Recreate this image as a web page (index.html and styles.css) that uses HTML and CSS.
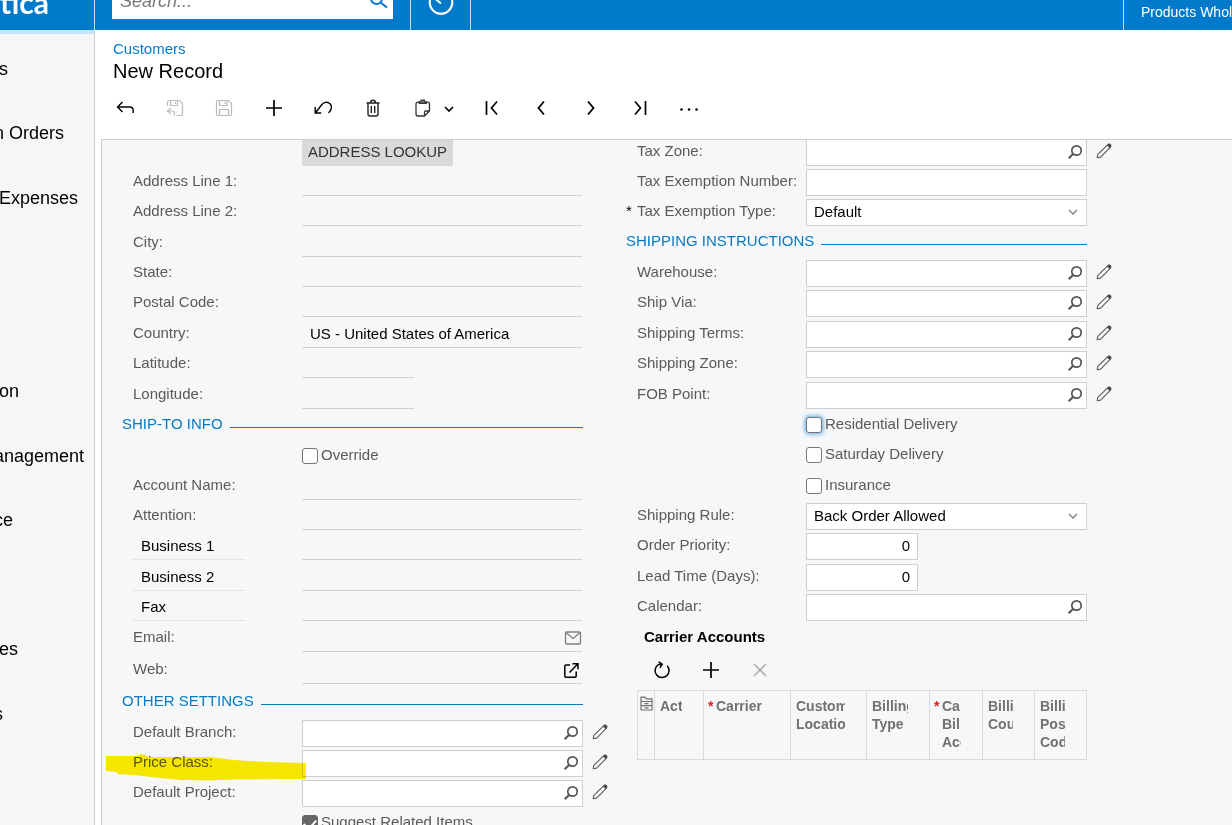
FILE: index.html
```html
<!DOCTYPE html>
<html lang="en">
<head>
  <meta charset="UTF-8" />
  <meta name="viewport" content="width=device-width, initial-scale=1.0" />
  <title>Customers - New Record</title>
  <link rel="stylesheet" href="styles.css">
</head>
<body>
  <!-- shared icons -->
  <svg class="sprite" aria-hidden="true">
    <symbol id="search" viewBox="0 0 16 16"><circle cx="9.5" cy="6.5" r="4.7" fill="none" stroke="#555" stroke-width="1.7"/><path d="M6 10L1.7 14.3" stroke="#555" stroke-width="2"/></symbol>
    <symbol id="pencil" viewBox="0 0 16 16"><path d="M1.2 14.8L1.8 11.4 11.6 1.8C12.4.9 13.6.9 14.3 1.6 15.1 2.4 15 3.6 14.2 4.4L4.6 14.1Z" fill="none" stroke="#5c5c5c" stroke-width="1.1" stroke-linejoin="round"/><path d="M11 2.4L13.6 5 14.7 4C15.4 3.1 15.3 2.2 14.6 1.4 13.8.7 12.8.7 12 1.3Z" fill="#4a4a4a"/></symbol>
    <symbol id="down" viewBox="0 0 10 10"><path d="M1 3L5 7 9 3" fill="none" stroke="#858585" stroke-width="1.5"/></symbol>
    <symbol id="plus" viewBox="0 0 16 16"><path d="M8 0V16M0 8H16" stroke="#000" stroke-width="1.7"/></symbol>
  </svg>

  <header class="topbar">
    <div class="logo">tica</div>
    <div class="search">
      <input type="text" placeholder="Search..." aria-label="Search">
      <button type="button" aria-label="Search"><svg width="20" height="20" viewBox="0 0 20 20"><circle cx="7.5" cy="7.5" r="5.5" fill="none" stroke="#027acc" stroke-width="2"/><path d="M11.5 11.5L18 16.5" stroke="#027acc" stroke-width="2.2"/></svg></button>
    </div>
    <button type="button" class="clock" aria-label="Business date"><svg width="26" height="26" viewBox="0 0 26 26" fill="none" stroke="#fff" stroke-width="2"><circle cx="13" cy="13.5" r="11.3"/><path d="M7.5 10L13 14.5"/></svg></button>
    <a href="#" class="company">Products Wholesale</a>
  </header>

  <div class="page">
    <nav class="sidebar">
      <ul>
        <li class="near"><a href="#">s</a></li>
        <li><a href="#">n Orders</a></li>
        <li class="near"><a href="#">Expenses</a></li>
        <li></li>
        <li></li>
        <li class="near"><a href="#">on</a></li>
        <li><a href="#">anagement</a></li>
        <li><a href="#">ce</a></li>
        <li></li>
        <li class="near"><a href="#">es</a></li>
        <li><a href="#">s</a></li>
      </ul>
    </nav>

    <main>
      <div class="title">
        <a href="#">Customers</a>
        <h1>New Record</h1>
      </div>

      <div class="toolbar">
        <button type="button" aria-label="Back"><svg width="18" height="18" viewBox="0 0 18 18" fill="none" stroke="#000" stroke-width="1.4"><path d="M6.5 3L1.5 8 6.5 13M1.5 8H13.5Q17.2 8 17.2 11.5V14"/></svg></button>
        <button type="button" aria-label="Save and close" disabled><svg width="18" height="18" viewBox="0 0 18 18" fill="none" stroke="#bbb" stroke-width="1.2"><path d="M1.5 7V3Q1.5 1.5 3 1.5H13.5L16.5 4.5V15Q16.5 16.5 15 16.5H10.5M4.5 1.5V6.5H11.5V1.5M9.5 3V5M5 9L1.5 12 5 15M1.5 12H6.5Q8.5 12 8.5 14V16.5"/></svg></button>
        <button type="button" aria-label="Save" disabled><svg width="18" height="18" viewBox="0 0 18 18" fill="none" stroke="#bbb" stroke-width="1.2"><path d="M1.5 3Q1.5 1.5 3 1.5H13.5L16.5 4.5V15Q16.5 16.5 15 16.5H3Q1.5 16.5 1.5 15ZM4.5 1.5V6.5H12V1.5M10 3V5M4.5 16.5V10.5H13.5V16.5"/></svg></button>
        <button type="button" aria-label="Add"><svg width="16" height="16"><use href="#plus"/></svg></button>
        <button type="button" aria-label="Undo"><svg width="18" height="18" viewBox="0 0 18 18" fill="none" stroke="#000" stroke-width="1.4"><path d="M1.2 8V14H7.2M1.5 13.7L7.5 6C9.5 3 13.5 2.3 16 4.8 18.3 7.2 17.8 11 14.5 14"/></svg></button>
        <button type="button" aria-label="Delete"><svg width="18" height="18" viewBox="0 0 18 18" fill="none" stroke="#222" stroke-width="1.4"><path d="M2.5 4H15.5M4 4V15Q4 17 6 17H12Q14 17 14 15V4M6.5 3.5Q6.5 1.2 9 1.2T11.5 3.5M7.3 7V14M10.7 7V14"/></svg></button>
        <div class="split">
          <button type="button" aria-label="Clipboard"><svg width="18" height="18" viewBox="0 0 18 18" fill="none" stroke="#333" stroke-width="1.3"><path d="M5 3.2H4Q2 3.2 2 5.2V15Q2 17 4 17H10.5L15.5 12V5.2Q15.5 3.2 13.5 3.2H12.5M15.5 12H12Q10.5 12 10.5 13.5V17"/><path d="M5.2 4.4V3Q7 3 7.3 1.2H10.2Q10.5 3 12.3 3V4.4Z" fill="#777"/></svg></button>
          <button type="button" aria-label="Clipboard menu"><svg width="12" height="12" viewBox="0 0 12 12"><path d="M2 5L6 9 10 5" fill="none" stroke="#000" stroke-width="1.7"/></svg></button>
        </div>
        <button type="button" aria-label="First"><svg width="16" height="16" viewBox="0 0 16 16" fill="none" stroke="#000" stroke-width="1.7"><path d="M2.5 1V15M13 1.5L7.5 8 13 14.5"/></svg></button>
        <button type="button" aria-label="Previous"><svg width="16" height="16" viewBox="0 0 16 16" fill="none" stroke="#000" stroke-width="1.8"><path d="M11 1.5L5.5 8 11 14.5"/></svg></button>
        <button type="button" aria-label="Next"><svg width="16" height="16" viewBox="0 0 16 16" fill="none" stroke="#000" stroke-width="1.8"><path d="M5 1.5L10.5 8 5 14.5"/></svg></button>
        <button type="button" aria-label="Last"><svg width="16" height="16" viewBox="0 0 16 16" fill="none" stroke="#000" stroke-width="1.7"><path d="M13.5 1V15M3 1.5L8.5 8 3 14.5"/></svg></button>
        <button type="button" aria-label="More"><svg width="20" height="16" viewBox="0 0 20 16"><circle cx="1.5" cy="9.5" r="1.3"/><circle cx="9" cy="9.5" r="1.3"/><circle cx="16.5" cy="9.5" r="1.3"/></svg></button>
      </div>

      <form class="panel">
        <div class="column">
          <div class="row"><span></span><button type="button" class="lookup">ADDRESS LOOKUP</button></div>
          <div class="row"><label for="line1">Address Line 1:</label><input type="text" class="plain" id="line1"></div>
          <div class="row"><label for="line2">Address Line 2:</label><input type="text" class="plain" id="line2"></div>
          <div class="row tall"><label for="city">City:</label><input type="text" class="plain" id="city"></div>
          <div class="row"><label for="state">State:</label><input type="text" class="plain" id="state"></div>
          <div class="row"><label for="postal">Postal Code:</label><input type="text" class="plain" id="postal"></div>
          <div class="row tall"><label for="country">Country:</label><input type="text" class="plain" id="country" value="US - United States of America"></div>
          <div class="row"><label for="lat">Latitude:</label><input type="text" class="plain short" id="lat"></div>
          <div class="row tall"><label for="long">Longitude:</label><input type="text" class="plain short" id="long"></div>

          <h2>SHIP-TO INFO</h2>
          <div class="row"><span></span><div class="check"><input type="checkbox" id="override"><label for="override">Override</label></div></div>
          <div class="row"><label for="account">Account Name:</label><input type="text" class="plain" id="account"></div>
          <div class="row"><label for="attention">Attention:</label><input type="text" class="plain" id="attention"></div>
          <div class="row"><select class="phone" aria-label="Phone 1 type"><option>Business 1</option></select><input type="text" class="plain" aria-label="Phone 1"></div>
          <div class="row tall"><select class="phone" aria-label="Phone 2 type"><option>Business 2</option></select><input type="text" class="plain" aria-label="Phone 2"></div>
          <div class="row"><select class="phone" aria-label="Phone 3 type"><option>Fax</option></select><input type="text" class="plain" aria-label="Phone 3"></div>
          <div class="row tall"><label for="email">Email:</label>
            <div class="linked"><input type="text" id="email"><button type="button" aria-label="Send email"><svg width="18" height="16" viewBox="0 0 18 16" fill="none" stroke="#808080" stroke-width="1.3"><rect x="1.5" y="2" width="15" height="12" rx="1"/><path d="M2 2.5L9 8.5 16 2.5"/></svg></button></div>
          </div>
          <div class="row web"><label for="web">Web:</label>
            <div class="linked"><input type="text" id="web"><button type="button" aria-label="Open site"><svg width="20" height="16" viewBox="0 0 20 16" fill="none" stroke="#000" stroke-width="1.5"><path d="M8 3H4Q2.8 3 2.8 4.2V14Q2.8 15.2 4 15.2H13Q14.2 15.2 14.2 14V9.5M7.5 10.5L15.5 2.2M10.5 1.8H16V7.3"/></svg></button></div>
          </div>

          <h2 class="spaced">OTHER SETTINGS</h2>
          <div class="row"><label for="branch">Default Branch:</label><div class="field"><input type="text" id="branch"><button type="button" aria-label="Select branch"><svg width="16" height="16"><use href="#search"/></svg></button></div><button type="button" class="edit" aria-label="Edit branch"><svg width="16" height="16"><use href="#pencil"/></svg></button></div>
          <div class="row"><label for="price">Price Class:</label><div class="field"><input type="text" id="price"><button type="button" aria-label="Select price class"><svg width="16" height="16"><use href="#search"/></svg></button></div><button type="button" class="edit" aria-label="Edit price class"><svg width="16" height="16"><use href="#pencil"/></svg></button>
            <svg class="marker" width="200" height="27" viewBox="0 0 200 27"><path d="M0 2H32L35 0 39 1 42 3 104 3 128 6 160 8 200 9V25L128 25.5 104 26.5 75 26 50 23.5 28 21 11 20V18L0 17Z" fill="#ffee00"/></svg>
          </div>
          <div class="row"><label for="project">Default Project:</label><div class="field"><input type="text" id="project"><button type="button" aria-label="Select project"><svg width="16" height="16"><use href="#search"/></svg></button></div><button type="button" class="edit" aria-label="Edit project"><svg width="16" height="16"><use href="#pencil"/></svg></button></div>
          <div class="row"><span></span><div class="check"><input type="checkbox" id="suggest" checked><label for="suggest">Suggest Related Items</label></div></div>
        </div>

        <div class="column">
          <div class="row"><label for="taxzone">Tax Zone:</label><div class="field"><input type="text" id="taxzone"><button type="button" aria-label="Select tax zone"><svg width="16" height="16"><use href="#search"/></svg></button></div><button type="button" class="edit" aria-label="Edit tax zone"><svg width="16" height="16"><use href="#pencil"/></svg></button></div>
          <div class="row"><label for="taxno">Tax Exemption Number:</label><div class="field"><input type="text" id="taxno"></div></div>
          <div class="row"><label for="taxtype" class="required">Tax Exemption Type:</label><div class="field"><select id="taxtype"><option>Default</option></select><svg class="arrow" width="10" height="10"><use href="#down"/></svg></div></div>

          <h2>SHIPPING INSTRUCTIONS</h2>
          <div class="row"><label for="warehouse">Warehouse:</label><div class="field"><input type="text" id="warehouse"><button type="button" aria-label="Select warehouse"><svg width="16" height="16"><use href="#search"/></svg></button></div><button type="button" class="edit" aria-label="Edit warehouse"><svg width="16" height="16"><use href="#pencil"/></svg></button></div>
          <div class="row"><label for="via">Ship Via:</label><div class="field"><input type="text" id="via"><button type="button" aria-label="Select ship via"><svg width="16" height="16"><use href="#search"/></svg></button></div><button type="button" class="edit" aria-label="Edit ship via"><svg width="16" height="16"><use href="#pencil"/></svg></button></div>
          <div class="row tall"><label for="terms">Shipping Terms:</label><div class="field"><input type="text" id="terms"><button type="button" aria-label="Select terms"><svg width="16" height="16"><use href="#search"/></svg></button></div><button type="button" class="edit" aria-label="Edit terms"><svg width="16" height="16"><use href="#pencil"/></svg></button></div>
          <div class="row"><label for="shipzone">Shipping Zone:</label><div class="field"><input type="text" id="shipzone"><button type="button" aria-label="Select shipping zone"><svg width="16" height="16"><use href="#search"/></svg></button></div><button type="button" class="edit" aria-label="Edit shipping zone"><svg width="16" height="16"><use href="#pencil"/></svg></button></div>
          <div class="row tall"><label for="fob">FOB Point:</label><div class="field"><input type="text" id="fob"><button type="button" aria-label="Select FOB point"><svg width="16" height="16"><use href="#search"/></svg></button></div><button type="button" class="edit" aria-label="Edit FOB point"><svg width="16" height="16"><use href="#pencil"/></svg></button></div>
          <div class="row"><span></span><div class="check active"><input type="checkbox" id="residential"><label for="residential">Residential Delivery</label></div></div>
          <div class="row"><span></span><div class="check"><input type="checkbox" id="saturday"><label for="saturday">Saturday Delivery</label></div></div>
          <div class="row tall"><span></span><div class="check"><input type="checkbox" id="insurance"><label for="insurance">Insurance</label></div></div>
          <div class="row"><label for="rule">Shipping Rule:</label><div class="field"><select id="rule"><option>Back Order Allowed</option></select><svg class="arrow" width="10" height="10"><use href="#down"/></svg></div></div>
          <div class="row"><label for="priority">Order Priority:</label><div class="field short"><input type="text" class="number" id="priority" value="0"></div></div>
          <div class="row tall"><label for="lead">Lead Time (Days):</label><div class="field short"><input type="text" class="number" id="lead" value="0"></div></div>
          <div class="row"><label for="calendar">Calendar:</label><div class="field"><input type="text" id="calendar"><button type="button" aria-label="Select calendar"><svg width="16" height="16"><use href="#search"/></svg></button></div></div>

          <section class="carriers">
            <h3>Carrier Accounts</h3>
            <div class="grid-tools">
              <button type="button" aria-label="Refresh"><svg width="18" height="18" viewBox="0 0 18 18" fill="none" stroke="#000" stroke-width="1.5"><path d="M4.2 4.5A7 7 0 1 0 14.2 4.8M4.2 4.5Q6 3.2 8.6 3.2M5.6.8L9.2 3.2 7 6.8"/></svg></button>
              <button type="button" aria-label="Add row"><svg width="16" height="16"><use href="#plus"/></svg></button>
              <button type="button" aria-label="Delete row" disabled><svg width="16" height="16" viewBox="0 0 16 16"><path d="M2 2L14 14M14 2L2 14" stroke="#b0b0b0" stroke-width="1.6"/></svg></button>
            </div>
            <table>
              <colgroup><col class="c-icon"><col class="c-active"><col class="c-carrier"><col class="c-location"><col class="c-type"><col class="c-bill"><col class="c-small"><col class="c-small"></colgroup>
              <thead>
                <tr>
                  <th class="files"><svg width="13" height="15" viewBox="0 0 13 15" fill="none" stroke="#707070" stroke-width="1.2"><path d="M1 14V1.2H5L6.5 2.8H12V14ZM1 5.5H12M1 9.7H12M4.5 7.6H8.5M4.5 11.8H8.5"/></svg></th>
                  <th><div>Active</div></th>
                  <th class="must"><div>Carrier</div></th>
                  <th><div>Customer<br>Location</div></th>
                  <th><div>Billing<br>Type</div></th>
                  <th class="must"><div>Carrier<br>Billing<br>Account</div></th>
                  <th><div>Billing<br>Country</div></th>
                  <th><div>Billing<br>Postal<br>Code</div></th>
                </tr>
              </thead>
            </table>
          </section>
        </div>
      </form>
    </main>
  </div>
</body>
</html>
```
FILE: styles.css
```css
* {
  box-sizing: border-box;
}
body {
  margin: 0;
  height: 100vh;
  overflow: hidden;
  display: flex;
  flex-direction: column;
  background: #fff;
  color: #000;
  font-family: "Liberation Sans", Arial, sans-serif;
  font-size: 15px;
}
.sprite {
  display: none;
}
svg {
  display: block;
  flex: none;
}
a {
  color: inherit;
  text-decoration: none;
}
button,
input,
select {
  font: inherit;
  color: inherit;
  margin: 0;
  padding: 0;
  border: none;
  border-radius: 0;
  background: none;
  outline: none;
}
button {
  display: flex;
  align-items: center;
  justify-content: center;
}

/* top bar */
.topbar {
  flex: none;
  height: 30px;
  display: flex;
  align-items: flex-end;
  overflow: hidden;
  background: #027acc;
  color: #fff;
}
.logo {
  width: 95px;
  height: 50px;
  border-right: 1px solid #c3e2f7;
  font-family: Lato, sans-serif;
  font-size: 30px;
  font-weight: bold;
  line-height: 44px;
}
.search {
  display: flex;
  align-items: center;
  width: 281px;
  height: 34px;
  margin: 0 17px 11px;
  padding: 0 4px 2px 8px;
  background: #fff;
}
.search input {
  flex: 1;
  min-width: 0;
  font-size: 18px;
  font-style: italic;
}
.search input::placeholder {
  color: #777;
}
.clock {
  width: 61px;
  height: 56px;
  border: solid #c3e2f7;
  border-width: 0 1px;
}
.company {
  width: 109px;
  height: 36px;
  margin-left: auto;
  padding-left: 17px;
  border-left: 1px solid #c3e2f7;
  font-size: 14px;
  line-height: 36px;
  white-space: nowrap;
}

.page {
  flex: 1;
  min-height: 0;
  display: flex;
}

/* side menu, scrolled to the right */
.sidebar {
  flex: none;
  width: 95px;
  overflow: hidden;
  background: #f5f6f8;
  border-top: 4px solid #c9e3f6;
  border-right: 1px solid #cdced2;
  font-size: 18px;
}
.sidebar ul {
  list-style: none;
  margin: 0;
  padding: 3px 0;
}
.sidebar li {
  height: 64px;
  margin-left: -6px;
  line-height: 65px;
  white-space: nowrap;
}
.sidebar li:nth-child(even) {
  height: 65px;
}
.sidebar .near {
  margin-left: -1px;
}

main {
  flex: 1;
  min-width: 0;
  display: flex;
  flex-direction: column;
}
.title {
  padding: 10px 18px 0;
}
.title a {
  display: block;
  color: #027acc;
  line-height: 18px;
}
.title h1 {
  margin: 0;
  font-size: 20px;
  font-weight: normal;
  line-height: 26px;
}

.toolbar {
  display: flex;
  height: 55px;
  padding: 8px 0 15px 5px;
}
.toolbar > button {
  width: 50px;
}
.toolbar > button:nth-child(even) {
  width: 49px;
}
.split {
  display: flex;
  gap: 11px;
  width: 70px;
  padding-left: 17px;
}

/* form */
.panel {
  flex: 1;
  min-height: 0;
  display: flex;
  overflow: hidden;
  margin-left: 6px;
  padding-left: 20px;
  background: #f5f7f9;
  border: solid #cdced2;
  border-width: 1px 0 0 1px;
}
.column {
  flex: 0 0 504px;
  margin-top: -1px;
}
.row {
  position: relative;
  display: grid;
  grid-template-columns: 180px 280px 34px;
  height: 27px;
  margin-bottom: 3px;
  color: #5a5a5c;
}
.tall {
  margin-top: 4px;
}
.web {
  margin-top: 5px;
}
.row label {
  line-height: 24px;
  white-space: nowrap;
}
.row > label {
  padding-left: 11px;
}
.required::before {
  content: "*";
  float: left;
  width: 11px;
  margin-left: -11px;
  color: #000;
}
.lookup {
  justify-self: start;
  width: 151px;
  padding-bottom: 2px;
  background: #d8d9db;
  color: #333;
}
.plain,
.linked {
  width: 280px;
  border-bottom: 1px solid #cdced0;
  color: #000;
}
.plain {
  padding: 0 0 2px 8px;
}
.linked {
  display: flex;
}
.linked input,
.field input,
.field select {
  flex: 1;
  min-width: 0;
  padding: 0 7px;
}
.field {
  display: flex;
  align-items: center;
  width: 281px;
  padding-bottom: 2px;
  border: 1px solid #cdced2;
  background: #fff;
  color: #000;
}
.field button {
  width: 22px;
}
.short {
  width: 112px;
}
.number {
  text-align: right;
}
select {
  appearance: none;
}
.arrow {
  margin-right: 8px;
}
.edit {
  justify-content: flex-end;
  padding: 0 8px 3px 0;
}
.phone {
  width: 112px;
  margin-left: 11px;
  padding: 0 0 1px 8px;
  border-bottom: 1px dotted #d5d6d9;
  color: #000;
}
.check {
  display: flex;
  gap: 3px;
}
.check input {
  appearance: none;
  width: 16px;
  height: 16px;
  margin-top: 5px;
  border: 1px solid #767676;
  border-radius: 3px;
  background: #fff;
}
.check input:checked {
  background: #666;
  border-color: #666;
  display: grid;
  place-items: center;
}
.check input:checked::before {
  content: "";
  width: 6px;
  height: 10px;
  border: solid #fff;
  border-width: 0 2px 2px 0;
  transform: rotate(42deg);
}
.active input {
  box-shadow: 0 0 4px 1px #5ba7dd;
}
.marker {
  position: absolute;
  left: -16px;
  top: 4px;
  mix-blend-mode: multiply;
  pointer-events: none;
}

h2 {
  display: flex;
  width: 461px;
  height: 28px;
  margin: 0 0 3px;
  color: #0a7ac0;
  font-size: 15px;
  font-weight: normal;
  line-height: 24px;
}
h2::after {
  content: "";
  flex: 1;
  height: 1px;
  margin: 15px 0 0 7px;
  background: #0a7ac0;
}
h2.spaced {
  margin-top: 5px;
}

/* carrier accounts grid */
.carriers {
  width: 450px;
  margin-left: 11px;
}
h3 {
  margin: 0;
  padding: 4px 7px;
  font-size: 15px;
  line-height: 18px;
}
.grid-tools {
  display: flex;
  height: 40px;
}
.grid-tools button {
  width: 49px;
}
table {
  width: 100%;
  table-layout: fixed;
  border-collapse: collapse;
  color: #707173;
  font-size: 14px;
  line-height: 18px;
}
th {
  height: 69px;
  padding: 6px 21px 7px 5px;
  border: 1px solid #d9dadd;
  text-align: left;
  vertical-align: top;
}
th div {
  overflow: hidden;
}
.files {
  padding: 5px 0 0 2px;
}
.must {
  position: relative;
  padding-left: 12px;
}
.must::before {
  content: "*";
  position: absolute;
  left: 4px;
  color: #e02020;
}
.c-icon {
  width: 17px;
}
.c-active {
  width: 49px;
}
.c-carrier {
  width: 87px;
}
.c-location {
  width: 76px;
}
.c-type {
  width: 63px;
}
.c-bill {
  width: 53px;
}
.c-small {
  width: 52px;
}
```
